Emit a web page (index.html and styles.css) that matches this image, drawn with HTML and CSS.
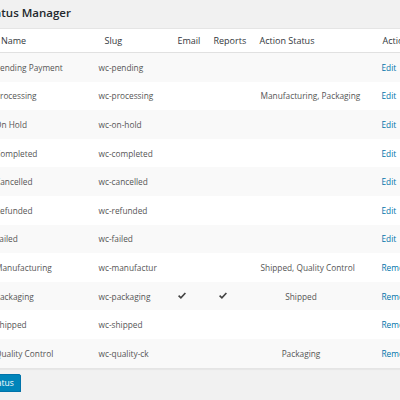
FILE: index.html
```
<!DOCTYPE html>
<html lang="en">
<head>
    <meta charset="UTF-8">
    <title>Order Status Manager</title>
    <link rel="stylesheet" href="styles.css">
</head>
<body>
    <div class="wrap">
        <h2 class="title">Order Status Manager</h2>
        <table class="statuses">
            <colgroup>
                <col class="col-name">
                <col class="col-slug">
                <col class="col-email">
                <col class="col-reports">
                <col class="col-action">
                <col>
            </colgroup>
            <thead>
                <tr>
                    <th>Name</th>
                    <th>Slug</th>
                    <th class="th-email">Email</th>
                    <th class="th-reports">Reports</th>
                    <th class="th-action">Action Status</th>
                    <th class="th-actions">Actions</th>
                </tr>
            </thead>
            <tbody id="rows"></tbody>
        </table>
        <div class="footer">
            <button class="button-primary">Add Status</button>
        </div>
    </div>

    <script>
        var statuses = [
            ["Pending Payment", "wc-pending", false, false, "", "Edit"],
            ["Processing", "wc-processing", false, false, "Manufacturing, Packaging", "Edit"],
            ["On Hold", "wc-on-hold", false, false, "", "Edit"],
            ["Completed", "wc-completed", false, false, "", "Edit"],
            ["Cancelled", "wc-cancelled", false, false, "", "Edit"],
            ["Refunded", "wc-refunded", false, false, "", "Edit"],
            ["Failed", "wc-failed", false, false, "", "Edit"],
            ["Manufacturing", "wc-manufactur", false, false, "Shipped, Quality Control", "Remove"],
            ["Packaging", "wc-packaging", true, true, "Shipped", "Remove"],
            ["Shipped", "wc-shipped", false, false, "", "Remove"],
            ["Quality Control", "wc-quality-ck", false, false, "Packaging", "Remove"]
        ];

        var check = '<svg class="check" width="8" height="7" viewBox="0 0 8 7"><path d="M0.6 3.6 L2.9 5.8 L7.4 1" fill="none" stroke="#444" stroke-width="1.7"/></svg>';

        var html = "";
        statuses.forEach(function (s) {
            html += "<tr>" +
                "<td>" + s[0] + "</td>" +
                "<td>" + s[1] + "</td>" +
                "<td class='td-email'>" + (s[2] ? check : "") + "</td>" +
                "<td class='td-reports'>" + (s[3] ? check : "") + "</td>" +
                "<td class='td-action'>" + s[4] + "</td>" +
                "<td><a href='#'>" + s[5] + "</a></td>" +
                "</tr>";
        });
        document.getElementById("rows").innerHTML = html;
    </script>
</body>
</html>
```

FILE: styles.css
```
html, body {
    margin: 0;
    padding: 0;
    background: #f1f1f1;
    overflow: hidden;
}
body {
    font-family: "Open Sans", "Liberation Sans", sans-serif;
    color: #555;
}
.wrap {
    margin-left: -16px;
    width: 470px;
}
.title {
    margin: 0 0 7px 0;
    padding: 5px 0 0 0;
    margin-left: -36px;
    font-size: 11.5px;
    line-height: 16px;
    font-weight: 600;
    color: #23282d;
}
.statuses {
    width: 100%;
    table-layout: fixed;
    border-collapse: collapse;
    background: #fff;
    border: 1px solid #e5e5e5;
    box-shadow: 0 1px 1px rgba(0, 0, 0, 0.04);
    font-size: 8.3px;
}
.col-name { width: 104px; }
.col-slug { width: 76px; }
.col-email { width: 36px; }
.col-reports { width: 50px; }
.col-action { width: 121px; }
.statuses th {
    height: 23px;
    padding: 0 0 0 16px;
    text-align: left;
    font-weight: 400;
    font-size: 9px;
    color: #32373c;
    border-bottom: 1px solid #e1e1e1;
    white-space: nowrap;
    overflow: hidden;
}
.statuses th.th-email { padding-left: 13px; }
.statuses th.th-reports { padding-left: 13px; }
.statuses th.th-action { padding-left: 9px; }
.statuses th.th-actions { padding-left: 11px; }
.statuses td {
    height: 28.6px;
    padding: 0 0 0 10px;
    vertical-align: middle;
    white-space: nowrap;
    overflow: hidden;
}
.statuses tbody tr:nth-child(odd) {
    background: #f9f9f9;
}
.statuses td.td-email { padding-left: 13px; }
.statuses td.td-reports { padding-left: 18px; }
.statuses td.td-action {
    text-align: center;
    padding: 0 30px 0 10px;
}
.statuses a {
    color: #0073aa;
    text-decoration: none;
}
.check {
    display: block;
    margin-top: -2px;
}
.footer {
    margin-top: 5px;
    margin-left: -20px;
}
.button-primary {
    display: block;
    font-family: "Open Sans", "Liberation Sans", sans-serif;
    font-size: 8.5px;
    line-height: 16px;
    height: 18px;
    padding: 0 6px;
    color: #fff;
    background: #0085ba;
    border: 1px solid #0073aa;
    border-radius: 2px;
    box-shadow: 0 1px 0 #006799;
}
```
